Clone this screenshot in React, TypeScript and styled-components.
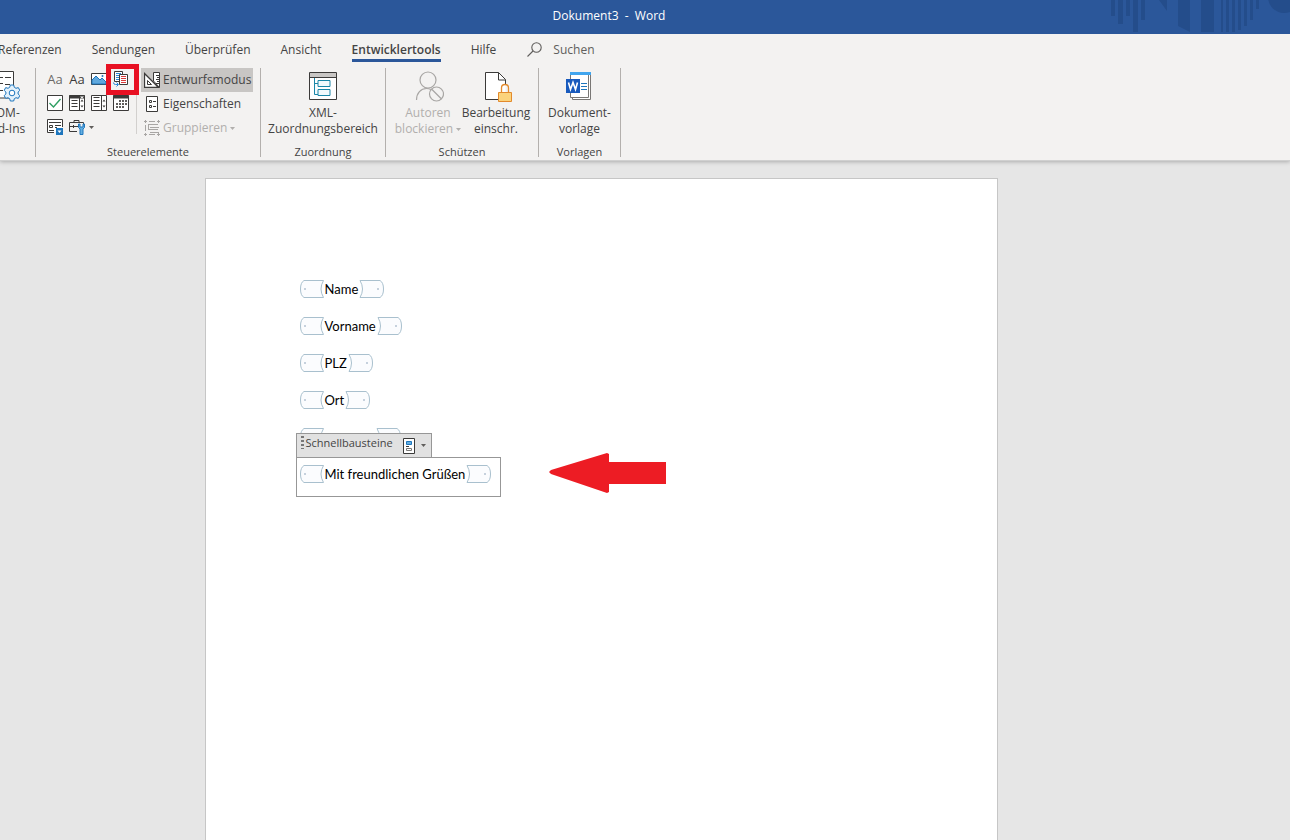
import React from 'react';
import styled, { createGlobalStyle } from 'styled-components';

const Global = createGlobalStyle`
  *, *::before, *::after { box-sizing: border-box; }
  body { margin: 0; background: #e6e6e6; font-family: "Open Sans", "Noto Sans", sans-serif; color: #444; }
  button { font: inherit; color: inherit; border: 0; background: none; padding: 0; margin: 0; }
  svg { display: block; flex: none; }
`;

const Shell = styled.div`
  min-height: 100vh;
  display: flex;
  flex-direction: column;
  overflow: hidden;
`;

const TitleBar = styled.header`
  position: relative;
  height: 34px;
  background: #2b579a;
  color: #fff;
  display: flex;
  align-items: center;
  justify-content: center;
  padding: 0 72px 2px 0;
`;

const Title = styled.h1`
  margin: 0;
  font-size: 12px;
  line-height: 16px;
  font-weight: 400;
  white-space: pre;
`;

const Pattern = styled.svg`
  position: absolute;
  right: 0;
  top: 0;
`;

const RibbonShell = styled.div`
  background: #f3f2f1;
  border-bottom: 1px solid #d0d0d0;
  box-shadow: 0 1px 4px rgba(0, 0, 0, 0.25);
  overflow: hidden;
`;

const Tabs = styled.nav`
  display: flex;
  align-items: flex-start;
  height: 32px;
  margin-left: -17px;
  padding-top: 4px;
`;

const Tab = styled.button<{ $active?: boolean }>`
  margin: 0 15px;
  height: 24px;
  padding-top: 2px;
  font-size: 12px;
  line-height: 19px;
  white-space: nowrap;
  font-weight: ${p => (p.$active ? 600 : 400)};
  border-bottom: 3px solid ${p => (p.$active ? '#2b579a' : 'transparent')};
`;

const Search = styled.button`
  display: flex;
  align-items: center;
  gap: 11px;
  margin-left: 16px;
  height: 22px;
  font-size: 12px;
  color: #605e5c;
`;

const Groups = styled.div`
  display: flex;
  height: 94px;
  padding: 2px 0 3px;
`;

const Group = styled.section<{ $width: number }>`
  flex: none;
  width: ${p => p.$width}px;
  display: flex;
  flex-direction: column;
  justify-content: space-between;
  border-right: 1px solid #b3b0ad;
`;

const GroupBody = styled.div<{ $start?: boolean }>`
  display: flex;
  justify-content: ${p => (p.$start ? 'flex-start' : 'center')};
  padding-left: ${p => (p.$start ? 8 : 0)}px;
`;

const GroupLabel = styled.h2`
  margin: 0;
  font-size: 11px;
  font-weight: 400;
  line-height: 10px;
  text-align: center;
`;

const ControlGrid = styled.div`
  display: grid;
  grid-template-columns: repeat(4, 22px);
  grid-auto-rows: 24px;
  height: 66px;
  border-right: 1px solid #d2d0ce;
  margin-right: 4px;
  width: 93px;
`;

const IconButton = styled.button<{ $wide?: boolean; $muted?: boolean }>`
  position: relative;
  display: flex;
  align-items: center;
  justify-content: ${p => (p.$wide ? 'flex-start' : 'center')};
  gap: 3px;
  padding-left: ${p => (p.$wide ? 3 : 0)}px;
  padding-bottom: 2px;
  grid-column: span ${p => (p.$wide ? 2 : 1)};
  font-size: 13px;
  color: ${p => (p.$muted ? '#6b6967' : '#3b3a39')};
`;

const Highlight = styled.span`
  position: absolute;
  left: -4px;
  top: -4px;
  width: 33px;
  height: 31px;
  border: 5px solid #e81123;
`;

const Commands = styled.div`
  display: flex;
  flex-direction: column;
`;

const Command = styled.button<{ $on?: boolean }>`
  display: flex;
  align-items: center;
  gap: 3px;
  width: 112px;
  height: 24px;
  padding-left: 3px;
  font-size: 12px;
  line-height: 16px;
  white-space: nowrap;
  background: ${p => (p.$on ? '#c8c6c4' : 'transparent')};
  &:disabled { color: #b1afad; }
`;

const BigButton = styled.button<{ $width: number }>`
  width: ${p => p.$width}px;
  display: flex;
  flex-direction: column;
  align-items: center;
  gap: 3px;
  padding-top: 2px;
  font-size: 12px;
  line-height: 16px;
  white-space: nowrap;
  &:disabled { color: #b1afad; }
`;

const LabelLine = styled.span`
  display: flex;
  align-items: center;
  gap: 3px;
`;

const BigLabel = styled.span`
  display: flex;
  flex-direction: column;
  align-items: center;
`;

const ClippedGroup = styled(Group)`
  align-items: flex-end;
  padding-right: 1px;
  justify-content: flex-start;
`;

const Workspace = styled.main`
  flex: 1;
  display: flex;
  justify-content: center;
  padding: 17px 88px 0 0;
`;

const Sheet = styled.article`
  width: 793px;
  background: #fff;
  border: 1px solid #c6c6c6;
  border-bottom: 0;
  padding: 91px 94px 0;
`;

const Line = styled.div<{ $compact?: boolean }>`
  height: ${p => (p.$compact ? 32 : 37)}px;
  display: flex;
  align-items: center;
  gap: 1px;
  font-family: Lato, "Open Sans", sans-serif;
  font-size: 13px;
  line-height: 18px;
  color: #000;
  white-space: nowrap;
`;

const Blank = styled.span`
  display: block;
  width: 50px;
`;

const Anchor = styled.div`
  position: relative;
`;

const ControlFrame = styled.div`
  position: absolute;
  left: -4px;
  top: -22px;
`;

const ControlTab = styled.div`
  display: flex;
  align-items: center;
  width: 136px;
  height: 25px;
  border: 1px solid #979797;
  background: #e1e1e1;
  padding-left: 4px;
  font-size: 11px;
  line-height: 16px;
  color: #444;
`;

const TabHandle = styled.span`
  flex: 1;
  display: flex;
  align-items: center;
  gap: 2px;
  padding-bottom: 6px;
`;

const GalleryButton = styled.button`
  display: flex;
  align-items: center;
  gap: 6px;
  padding-right: 5px;
`;

const ControlBox = styled.div`
  width: 205px;
  height: 40px;
  margin-top: -1px;
  border: 1px solid #979797;
  background: #fff;
  padding: 0 3px;
`;

const Arrow = styled.svg`
  position: absolute;
  left: 248px;
  top: -3px;
`;

const Caret = ({ color = '#605e5c' }: { color?: string }) => (
  <svg width="5" height="3" viewBox="0 0 5 3"><path d="M0 0h5L2.500 3z" fill={color} /></svg>
);

const OpenTag = () => (
  <svg width="24" height="18" viewBox="0 0 24 18" fill="#fbfcfe" stroke="#a9c0ce">
    <path d="M4 .5H23.500Q18.500 9 23.500 17.500H4Q.5 15.500.5 9T4 .5z" />
    <circle cx="5" cy="9" r="1" fill="#b4c3d2" stroke="none" />
  </svg>
);

const CloseTag = () => (
  <svg width="25" height="18" viewBox="0 0 25 18" fill="#fbfcfe" stroke="#a9c0ce">
    <path d="M1 .5H21Q24.500 2.500 24.500 9T21 17.500H1Q6 9 1 .5z" />
    <circle cx="19" cy="9" r="1" fill="#b4c3d2" stroke="none" />
  </svg>
);

const Field = ({ children, compact }: { children?: React.ReactNode; compact?: boolean }) => (
  <Line $compact={compact}>
    <OpenTag />
    {children ? <span>{children}</span> : <Blank />}
    <CloseTag />
  </Line>
);

const ink = '#3b3a39';
const blue = '#1e76bd';

const TitlePattern = () => (
  <Pattern width="200" height="34" viewBox="0 0 200 34" fill="#244d8b">
    <path d="M21 0h4v16h-4zM28 0h5v24h-5zM36 0h4v16h-4zM43 0h5v32h-5zM51 0h4v20h-4zM69 0h8v11zM88 0h12v32l-12-6zM111 0h13v32h-13zM131 0h2v32h-2zM136 0h3v32h-3zM142 0h3v32h-3zM148 0h3v30h-3zM154 0h3v26h-3zM160 0h3v20h-3zM166 0h3v9h-3z" />
    <circle cx="194" cy="-3" r="16" />
  </Pattern>
);

const PictureIcon = () => (
  <svg width="16" height="12" viewBox="0 0 16 12">
    <path d="M.5.5h15v11H.5z" fill="#fff" stroke={ink} />
    <path d="M1 7l4-4 4 4 2-2 4 4v2H1z" fill="#5fa8dd" stroke={blue} />
    <circle cx="11.500" cy="3" r="1" fill={blue} />
  </svg>
);

const BlocksIcon = () => (
  <svg width="16" height="16" viewBox="0 0 16 16" fill="none">
    <path d="M1.500.5h8v10h-8z" fill="#fff" stroke={ink} />
    <path d="M3 2.500h5M3 4.500h3M3 6.500h3M3 8.500h3" stroke="#2b88d8" />
    <path d="M6.500 3.500h8v10h-8z" fill="#fff" stroke={ink} />
    <path d="M8 5.500h5M8 7.500h5M8 9.500h5M8 11.500h5" stroke="#d83b3b" />
    <path d="M.5 11.500q0 2 2 2H5M3.500 11.500l2 2-2 2" stroke="#2b88d8" />
  </svg>
);

const CheckIcon = () => (
  <svg width="16" height="16" viewBox="0 0 16 16" fill="none">
    <path d="M.5.5h15v15H.5z" fill="#fff" stroke={ink} />
    <path d="M2.500 8l4 4 7-8" stroke="#2e9e62" strokeWidth="1.400" />
  </svg>
);

const ListIcon = ({ combo }: { combo?: boolean }) => (
  <svg width="16" height="16" viewBox="0 0 16 16" fill="none" stroke={ink}>
    <path d="M.5.5h15v15H.5zM10.500.5v15" fill="#fff" />
    {combo && <path d="M0 2h16" strokeWidth="3" />}
    {combo && <path d="M11 1.500h4l-2 2z" fill="#fff" stroke="none" />}
    <path d="M2.500 5.500h6M2.500 8.500h6M2.500 11.500h6" />
    {!combo && <path d="M2.500 2.500h6" />}
    <path d="M11.500 6.500h3L13 4.500zM11.500 10.500h3L13 12.500z" fill={ink} stroke="none" />
  </svg>
);

const CalendarIcon = () => (
  <svg width="16" height="16" viewBox="0 0 16 16" fill="none" stroke={ink}>
    <path d="M.5.5h15v15H.5z" fill="#fff" />
    <path d="M0 2h16" strokeWidth="3" />
    <path d="M6 6h8M3 9h11M3 12h8" strokeWidth="2" strokeDasharray="2 1" stroke="#605e5c" />
  </svg>
);

const RepeatIcon = () => (
  <svg width="16" height="16" viewBox="0 0 16 16" fill="none" stroke={ink}>
    <path d="M7 13.500H.5V.5h15V8" fill="#fff" />
    <path d="M2 3.500h12M8 6.500h6M8 8.500h2M2 11.500h5M2.500 6.500h3v2h-3z" />
    <path d="M9 9h7v7H9z" fill={blue} stroke="none" />
    <path d="M10.500 11.500h4l-2 2.500z" fill="#fff" stroke="none" />
  </svg>
);

const ToolboxIcon = () => (
  <svg width="17" height="16" viewBox="0 0 17 16" fill="none">
    <path d="M8 12.500H.5v-9h14V5M5 3.500v-2h5v2M.5 7.500H9M4.500 6v3" stroke={ink} />
    <path d="M9.500 5v3.500l1.500 1.500v5.500h3V10l1.500-1.500V5H14v3h-3V5z" fill="#63aee0" stroke={blue} />
  </svg>
);

const DesignIcon = () => (
  <svg width="16" height="16" viewBox="0 0 16 16" fill="none" stroke={ink}>
    <path d="M.5 1.500v14h14z" fill="#fff" strokeWidth="1.300" />
    <path d="M3.500 8.500v4h4z" />
    <path d="M9.500 7V.5h6v15L9.500 9z" fill="#fff" />
    <path d="M12 3.500h3M13 5.500h2M12 7.500h3M13 9.500h2M12 11.500h3" />
  </svg>
);

const PropertiesIcon = () => (
  <svg width="16" height="16" viewBox="0 0 16 16" fill="none" stroke={ink}>
    <path d="M2.500.5h11v15h-11z" fill="#fff" />
    <path d="M5.500 4.500h2v2h-2zM5.500 9.500h2v2h-2z" />
    <path d="M9 5.500h3M9 10.500h3" />
  </svg>
);

const GroupIcon = () => (
  <svg width="16" height="16" viewBox="0 0 16 16" fill="none" stroke="#a8a6a4">
    <path d="M0 1.500h3M5 1.500h6M13 1.500h3M1.500 0v3M1.500 5v6M14.500 0v3M1.500 13v3M14.500 13v3M0 14.500h3M5 14.500h6M13 14.500h3" />
    <path d="M4 4.500h10M6 7.500h9M4 9.500h10M6 12.500h9M4.500 4v6" />
  </svg>
);

const AddInsIcon = () => (
  <svg width="32" height="32" viewBox="0 0 32 32" fill="none">
    <path d="M3 1.500h22.500V28H3z" fill="#fff" stroke={ink} />
    <path d="M11 7.500h4M17 7.500h6M17 14.500h5M11 13.500h4M11 20.500h4" stroke={ink} />
    <path d="M22.300 15h3.400l.6 2.300 1.700 1 2.300-.7 1.500 2.800-1.700 1.600v2l1.700 1.600-1.500 2.800-2.300-.7-1.700 1-.6 2.300h-3.400l-.6-2.300-1.700-1-2.300.7-1.500-2.800 1.700-1.600v-2l-1.700-1.600 1.500-2.800 2.300.7 1.700-1z" fill="#e3f1fb" stroke={blue} />
    <circle cx="24" cy="23" r="2.800" fill="#fff" stroke={blue} />
  </svg>
);

const XmlIcon = () => (
  <svg width="32" height="32" viewBox="0 0 32 32" fill="none">
    <path d="M2.500 2.500h27v27h-27z" fill="#fff" stroke={ink} />
    <path d="M3 3h26v4H3z" fill="#c8c6c4" />
    <path d="M2 7.500h28" stroke={ink} />
    <path d="M7.500 8v16.500H11M7.500 13.500H11M11 10.500h12v6H11zM11 19.500h12v6H11z" fill="#f2fafd" stroke="#1a86a8" />
  </svg>
);

const BlockAuthorsIcon = () => (
  <svg width="32" height="32" viewBox="0 0 32 32" fill="none" stroke="#a8a6a4" strokeWidth="1.200">
    <circle cx="16" cy="10" r="8" />
    <path d="M4.500 30c0-7 4.500-11.500 10-11.500 2 0 3 .3 4.500 1" />
    <circle cx="24.500" cy="24" r="7" fill="#f3f2f1" />
    <path d="M19.500 19l10 10" />
  </svg>
);

const RestrictIcon = () => (
  <svg width="32" height="32" viewBox="0 0 32 32" fill="none">
    <path d="M5.500 2.500h13l7 7v20h-20z" fill="#fff" />
    <path d="M18 29.500H5.500v-27h13l7 7V14M18.500 2.500v7.500h7" stroke={ink} />
    <path d="M21.500 22v-4q0-3.500 3.500-3.500t3.500 3.500v4" stroke="#e38a2c" strokeWidth="1.300" />
    <path d="M18.500 22.500h13v9h-13z" fill="#fbd37c" stroke="#e38a2c" />
  </svg>
);

const WordIcon = () => (
  <svg width="32" height="32" viewBox="0 0 32 32" fill="none">
    <path d="M8.500 4.500h18v25h-18z" fill="#fff" stroke="#797775" />
    <path d="M6.500 3.500h18v24h-18z" fill="#fff" stroke="#797775" />
    <path d="M6 2h21v3H6z" fill="#41a5ee" />
    <path d="M17 13.500h6M17 16.500h6M17 19.500h6" stroke={blue} />
    <path d="M2 9h14v14H2z" fill="#185abd" />
    <path d="M4.500 12.500l2 7 2.500-7 2.500 7 2-7" stroke="#fff" strokeWidth="1.600" />
  </svg>
);

const SearchIcon = () => (
  <svg width="15" height="15" viewBox="0 0 15 15" fill="none" stroke="#605e5c" strokeWidth="1.100">
    <circle cx="9.500" cy="5.500" r="4.700" /><path d="M6 9L.5 14.500" />
  </svg>
);

const GalleryIcon = () => (
  <svg width="12" height="16" viewBox="0 0 12 16" fill="none" stroke={ink}>
    <path d="M.5.5h11v15H.5z" fill="#fff" />
    <path d="M3.500 3.500h5v3h-5z" fill="#63aee0" stroke={blue} />
    <path d="M3 8.500h3" /><path d="M3.500 10.500h5v2h-5z" stroke="#797775" />
  </svg>
);

const GripIcon = () => (
  <svg width="3" height="13" viewBox="0 0 3 13" fill="#777"><path d="M0 0h3v2H0zM0 4h3v2H0zM0 8h3v2H0zM0 12h3v1H0z" /></svg>
);

export default function App() {
  return (
    <Shell>
      <Global />
      <TitleBar>
        <TitlePattern />
        <Title>{'Dokument3  -  Word'}</Title>
      </TitleBar>
      <RibbonShell>
        <Tabs>
          <Tab>Referenzen</Tab>
          <Tab>Sendungen</Tab>
          <Tab>Überprüfen</Tab>
          <Tab>Ansicht</Tab>
          <Tab $active>Entwicklertools</Tab>
          <Tab>Hilfe</Tab>
          <Search><SearchIcon />Suchen</Search>
        </Tabs>
        <Groups>
          <ClippedGroup $width={36}>
            <BigButton $width={60}>
              <AddInsIcon />
              <BigLabel><span>COM-</span><span>Add-Ins</span></BigLabel>
            </BigButton>
          </ClippedGroup>
          <Group $width={225}>
            <GroupBody $start>
              <ControlGrid>
                <IconButton $muted>Aa</IconButton>
                <IconButton>Aa</IconButton>
                <IconButton aria-label="Bild"><PictureIcon /></IconButton>
                <IconButton aria-label="Bausteinkatalog"><BlocksIcon /><Highlight /></IconButton>
                <IconButton aria-label="Kontrollkästchen"><CheckIcon /></IconButton>
                <IconButton aria-label="Kombinationsfeld"><ListIcon combo /></IconButton>
                <IconButton aria-label="Dropdownliste"><ListIcon /></IconButton>
                <IconButton aria-label="Datumsauswahl"><CalendarIcon /></IconButton>
                <IconButton aria-label="Wiederholter Abschnitt"><RepeatIcon /></IconButton>
                <IconButton $wide aria-label="Vorversionstools"><ToolboxIcon /><Caret /></IconButton>
              </ControlGrid>
              <Commands>
                <Command $on><DesignIcon />Entwurfsmodus</Command>
                <Command><PropertiesIcon />Eigenschaften</Command>
                <Command disabled><GroupIcon />Gruppieren<Caret color="#b1afad" /></Command>
              </Commands>
            </GroupBody>
            <GroupLabel>Steuerelemente</GroupLabel>
          </Group>
          <Group $width={125}>
            <GroupBody>
              <BigButton $width={112}>
                <XmlIcon />
                <BigLabel><span>XML-</span><span>Zuordnungsbereich</span></BigLabel>
              </BigButton>
            </GroupBody>
            <GroupLabel>Zuordnung</GroupLabel>
          </Group>
          <Group $width={153}>
            <GroupBody>
              <BigButton $width={68} disabled>
                <BlockAuthorsIcon />
                <BigLabel><span>Autoren</span><LabelLine>blockieren<Caret color="#b1afad" /></LabelLine></BigLabel>
              </BigButton>
              <BigButton $width={68}>
                <RestrictIcon />
                <BigLabel><span>Bearbeitung</span><span>einschr.</span></BigLabel>
              </BigButton>
            </GroupBody>
            <GroupLabel>Schützen</GroupLabel>
          </Group>
          <Group $width={82}>
            <GroupBody>
              <BigButton $width={68}>
                <WordIcon />
                <BigLabel><span>Dokument-</span><span>vorlage</span></BigLabel>
              </BigButton>
            </GroupBody>
            <GroupLabel>Vorlagen</GroupLabel>
          </Group>
        </Groups>
      </RibbonShell>
      <Workspace>
        <Sheet>
          <Field>Name</Field>
          <Field>Vorname</Field>
          <Field>PLZ</Field>
          <Field>Ort</Field>
          <Field />
          <Anchor>
            <ControlFrame>
              <ControlTab>
                <TabHandle><GripIcon />Schnellbausteine</TabHandle>
                <GalleryButton aria-label="Baustein wählen"><GalleryIcon /><Caret /></GalleryButton>
              </ControlTab>
              <ControlBox><Field compact>Mit freundlichen Grüßen</Field></ControlBox>
            </ControlFrame>
            <Arrow width="120" height="42" viewBox="0 0 120 42" fill="#ed1c24">
              <path d="M1 20L3 18 59 1 61 2V10H118V32H61V40L59 41 3 22z" />
            </Arrow>
          </Anchor>
        </Sheet>
      </Workspace>
    </Shell>
  );
}
